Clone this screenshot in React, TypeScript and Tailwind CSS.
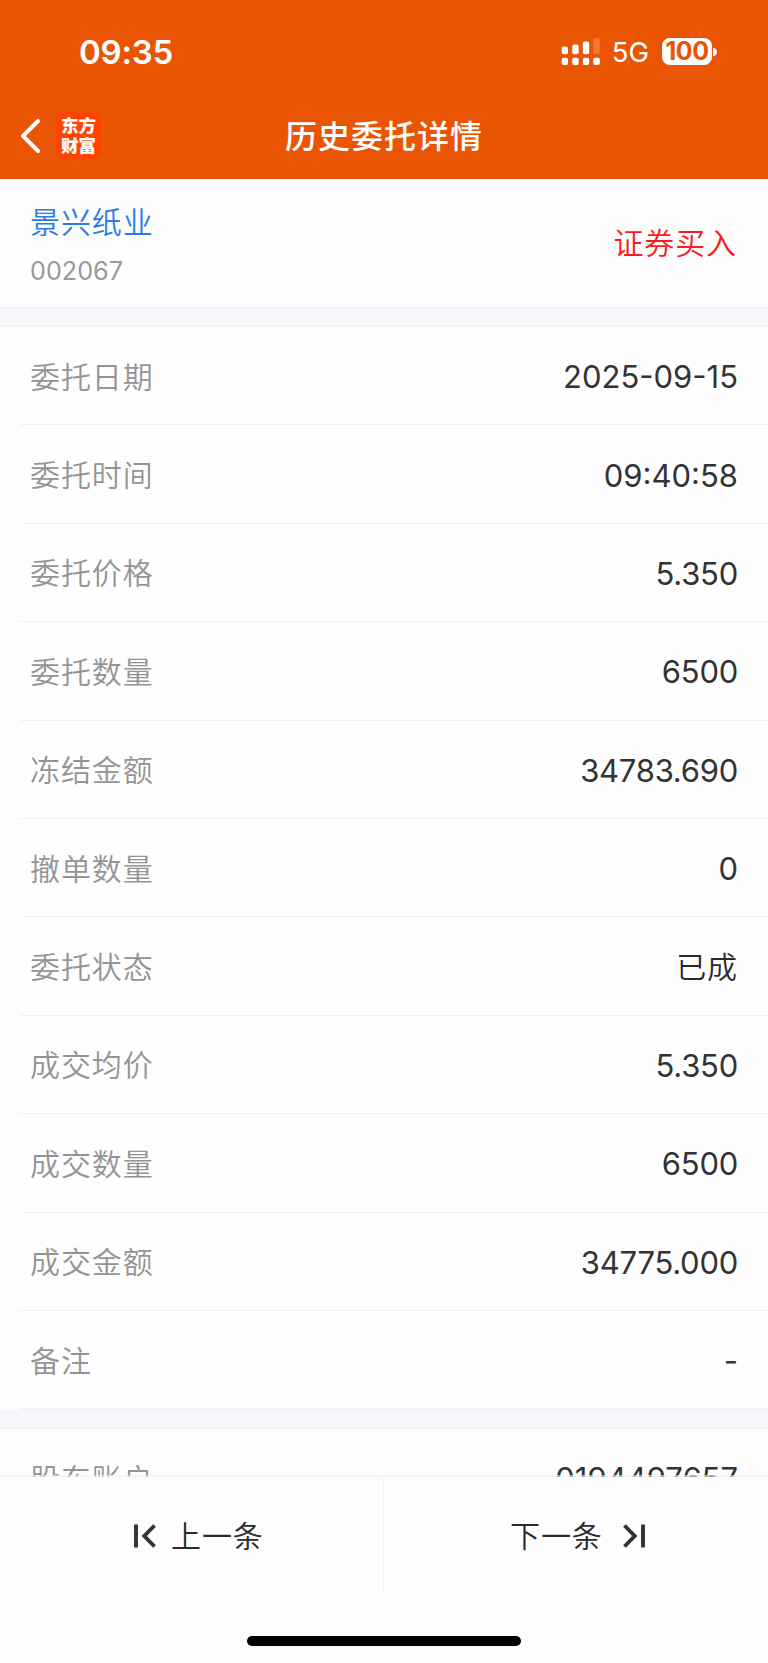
import React from "react";

type Row = { label: string; value: string; kind?: "cjk" | "decimal" };

const rows: Row[] = [
  { label: "委托日期", value: "2025-09-15" },
  { label: "委托时间", value: "09:40:58" },
  { label: "委托价格", value: "5.350", kind: "decimal" },
  { label: "委托数量", value: "6500", kind: "decimal" },
  { label: "冻结金额", value: "34783.690", kind: "decimal" },
  { label: "撤单数量", value: "0" },
  { label: "委托状态", value: "已成", kind: "cjk" },
  { label: "成交均价", value: "5.350", kind: "decimal" },
  { label: "成交数量", value: "6500", kind: "decimal" },
  { label: "成交金额", value: "34775.000", kind: "decimal" },
  { label: "备注", value: "-" },
];

function SignalIcon() {
  return (
    <svg width="40" height="29" viewBox="0 0 40 29" fill="white">
      <rect x="0.700" y="9.500" width="6.300" height="7.800" rx="2" />
      <rect x="11.200" y="7.500" width="6.500" height="9.800" rx="2" />
      <rect x="21.800" y="4.500" width="6.400" height="12.800" rx="2" />
      <rect x="32.200" y="1.200" width="6.600" height="16.100" rx="2" opacity="0.2" />
      <rect x="0.700" y="20.800" width="6.300" height="7.200" rx="2" />
      <rect x="11.200" y="20.800" width="6.500" height="7.200" rx="2" />
      <rect x="21.800" y="20.800" width="6.400" height="7.200" rx="2" />
      <rect x="32.200" y="20.800" width="6.600" height="7.200" rx="2" />
    </svg>
  );
}

function valueClass(kind?: "cjk" | "decimal") {
  if (kind === "cjk") return "text-[30px] font-[350] tracking-[0.9px] text-[#2b2b2b]";
  if (kind === "decimal") return "text-[31px] tracking-[-0.25px] text-[#333333]";
  return "text-[31px] text-[#333333]";
}

function DetailRow({ label, value, kind }: Row) {
  return (
    <div className="ml-5 flex h-[98.4px] shrink-0 items-center justify-between border-b border-[#f1f1f1] pl-[10px] pr-[30px] pt-[2px]">
      <span className="text-[30px] font-[350] tracking-[0.9px] text-[#949494]">{label}</span>
      <span className={valueClass(kind)}>{value}</span>
    </div>
  );
}

export default function App() {
  return (
    <div className="flex h-[1663px] w-[768px] flex-col overflow-hidden bg-[#fefefe] font-['Inter','Noto_Sans_CJK_SC',sans-serif] leading-none">
      <header className="flex h-[179px] shrink-0 flex-col bg-[#ea5504] text-white">
        <div className="flex h-[94px] shrink-0 items-center justify-between pl-[79px] pr-[51px] pt-[9px]">
          <span className="pt-px text-[33px] font-[580] tracking-[-0.2px]">09:35</span>
          <div className="flex items-center">
            <SignalIcon />
            <span className="ml-[11px] pt-[2px] text-[27.500px]">5G</span>
            <div className="ml-[13px] flex h-[27px] w-[50px] items-center justify-center rounded-[8px] bg-white text-[25px] font-bold tracking-[-0.5px] text-[#ea5504]">
              100
            </div>
            <svg className="ml-px" width="4" height="10" viewBox="0 0 4 10">
              <path d="M0 0.5C2.5 1 4 3 4 5S2.500 9 0 9.500Z" fill="white" />
            </svg>
          </div>
        </div>
        <div className="grid h-[85px] grid-cols-[1fr_auto_1fr] items-center">
          <div className="flex items-center pl-5">
            <svg width="22" height="36" viewBox="0 0 22 36" fill="none" stroke="white" strokeWidth="4" strokeLinecap="round" strokeLinejoin="round">
              <path d="M18 2L3 17L18 32" />
            </svg>
            <div className="-mt-[2px] ml-[13px] flex h-[47px] w-[47px] flex-col items-center justify-center rounded-[10px] bg-[#ff4400] pb-[2px] font-['Noto_Sans_CJK_SC',sans-serif] text-[17.500px] font-black leading-[19.500px]">
              <span>东方</span>
              <span>财富</span>
            </div>
          </div>
          <h1 className="pt-px text-[32px] font-medium tracking-[1px]">历史委托详情</h1>
          <div />
        </div>
      </header>

      <section className="flex h-[128px] shrink-0 items-center justify-between px-[30px]">
        <div className="flex flex-col gap-[22px] pt-[6px]">
          <span className="text-[30px] font-[350] tracking-[0.9px] text-[#2a7de8]">景兴纸业</span>
          <span className="text-[25.200px] text-[#999999]">002067</span>
        </div>
        <span className="mr-px text-[30px] font-[350] tracking-[0.9px] text-[#fb1a20]">证券买入</span>
      </section>
      <div className="h-5 shrink-0 border-y border-[#f0f1f2] bg-[#f5f7fa]" />

      <main className="flex h-[1150px] shrink-0 flex-col overflow-hidden">
        {rows.map((row) => (
          <DetailRow key={row.label} {...row} />
        ))}
        <div className="h-5 shrink-0 border-b border-[#efefef] bg-[#f5f7fa]" />
        <DetailRow label="股东账户" value="0194497657" />
      </main>

      <footer className="relative -mt-[2px] flex min-h-0 flex-1 flex-col items-center border-t-2 border-[#f0f0f0]/60 bg-[#fdfdfd] bg-clip-padding text-[30px] font-[350] text-[#2b2b2b]">
        <div className="grid h-[117px] w-full grid-cols-2">
          <div className="flex items-center border-r border-[#f3f3f3] pl-[133px]">
            <svg width="24" height="24" viewBox="0 0 24 24" fill="none" stroke="#333333" strokeWidth="3.900">
              <path d="M3 0.500V23.500M21.500 1.500L11.300 12L21.500 22.500" />
            </svg>
            <span className="ml-[14px] pt-px tracking-[0.9px]">上一条</span>
          </div>
          <div className="flex items-center pl-[126px]">
            <span className="pt-px tracking-[0.9px]">下一条</span>
            <svg className="ml-[19px]" width="24" height="24" viewBox="0 0 24 24" fill="none" stroke="#333333" strokeWidth="3.900">
              <path d="M21 0.500V23.500M2.500 1.500L12.700 12L2.500 22.500" />
            </svg>
          </div>
        </div>
        <div className="mt-[42px] h-[10px] w-[274px] shrink-0 rounded-full bg-black" />
        <div className="mt-[14px] h-[2px] w-full shrink-0 bg-[#f9f9f9]" />
      </footer>
    </div>
  );
}
